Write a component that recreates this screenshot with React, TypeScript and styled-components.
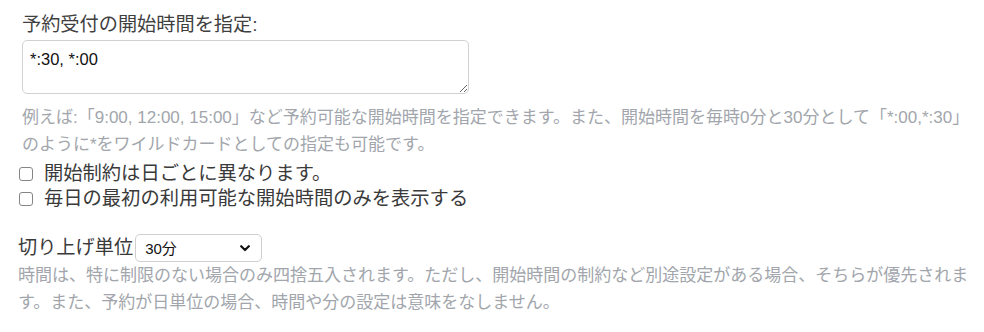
import styled, { createGlobalStyle } from "styled-components";

const GlobalStyle = createGlobalStyle`
  body {
    margin: 0;
    background: #ffffff;
    font-family: "Liberation Sans", "Noto Sans CJK JP", sans-serif;
    color: #3a3a3a;
  }
`;

const Page = styled.div`
  width: 954px;
  padding: 12px 12px 0 18px;
`;

const Group = styled.div`
  padding-left: 4px;
`;

const FieldLabel = styled.label`
  display: block;
  font-size: 19.2px;
  line-height: 26px;
  color: #3f3f3f;
`;

const TimeArea = styled.textarea`
  display: block;
  box-sizing: border-box;
  width: 447px;
  height: 54px;
  margin-top: 2px;
  padding: 8px 7px;
  border: 1px solid #d2d2d2;
  border-radius: 5px;
  font-family: "Liberation Sans", "Noto Sans CJK JP", sans-serif;
  font-size: 16.5px;
  line-height: 20px;
  color: #111;
  outline: none;
`;

const Help = styled.p<{ $top: number }>`
  margin: ${(p) => p.$top}px 0 0;
  font-size: 17px;
  line-height: 27px;
  color: #a2a6ac;
`;

const CheckList = styled.div`
  margin-top: 3px;
`;

const CheckRow = styled.label`
  display: flex;
  align-items: center;
  font-size: 19.3px;
  line-height: 25px;
  color: #3a3a3a;
`;

const Box = styled.input`
  -webkit-appearance: none;
  appearance: none;
  flex: none;
  box-sizing: border-box;
  width: 14px;
  height: 14px;
  margin: 0 11px 0 1px;
  border: 1.5px solid #858585;
  border-radius: 3px;
  background: #fff;
`;

const SelectRow = styled.div`
  display: flex;
  align-items: center;
  margin-top: 23px;
`;

const InlineLabel = styled.label`
  font-size: 19.2px;
  line-height: 28px;
  color: #3a3a3a;
`;

const SelectWrap = styled.div`
  position: relative;
  width: 127px;
  height: 28px;
  margin-left: 2px;
`;

const Select = styled.select`
  appearance: none;
  box-sizing: border-box;
  width: 100%;
  height: 100%;
  padding: 0 0 0 9px;
  border: 1px solid #cfcfcf;
  border-radius: 5px;
  background: #fff;
  font-family: "Liberation Sans", "Noto Sans CJK JP", sans-serif;
  font-size: 15px;
  color: #111;
  outline: none;
`;

const Chevron = styled.svg`
  position: absolute;
  right: 12px;
  top: 11px;
  pointer-events: none;
`;

export default function App() {
  return (
    <>
      <GlobalStyle />
      <Page>
        <Group>
          <FieldLabel>予約受付の開始時間を指定:</FieldLabel>
          <TimeArea defaultValue="*:30, *:00" />
          <Help $top={10}>
            例えば:「9:00, 12:00, 15:00」など予約可能な開始時間を指定できます。また、開始時間を毎時0分と30分として「*:00,*:30」のように*をワイルドカードとしての指定も可能です。
          </Help>
        </Group>
        <CheckList>
          <CheckRow>
            <Box type="checkbox" />
            開始制約は日ごとに異なります。
          </CheckRow>
          <CheckRow>
            <Box type="checkbox" />
            毎日の最初の利用可能な開始時間のみを表示する
          </CheckRow>
        </CheckList>
        <SelectRow>
          <InlineLabel>切り上げ単位</InlineLabel>
          <SelectWrap>
            <Select defaultValue="30">
              <option value="5">5分</option>
              <option value="10">10分</option>
              <option value="15">15分</option>
              <option value="30">30分</option>
              <option value="60">60分</option>
            </Select>
            <Chevron width="10" height="7" viewBox="0 0 10 7">
              <path d="M1.2 1.2 L5 5 L8.8 1.2" fill="none" stroke="#111" strokeWidth="2.2" strokeLinecap="round" strokeLinejoin="round" />
            </Chevron>
          </SelectWrap>
        </SelectRow>
        <Help $top={0}>
          時間は、特に制限のない場合のみ四捨五入されます。ただし、開始時間の制約など別途設定がある場合、そちらが優先されます。また、予約が日単位の場合、時間や分の設定は意味をなしません。
        </Help>
      </Page>
    </>
  );
}
